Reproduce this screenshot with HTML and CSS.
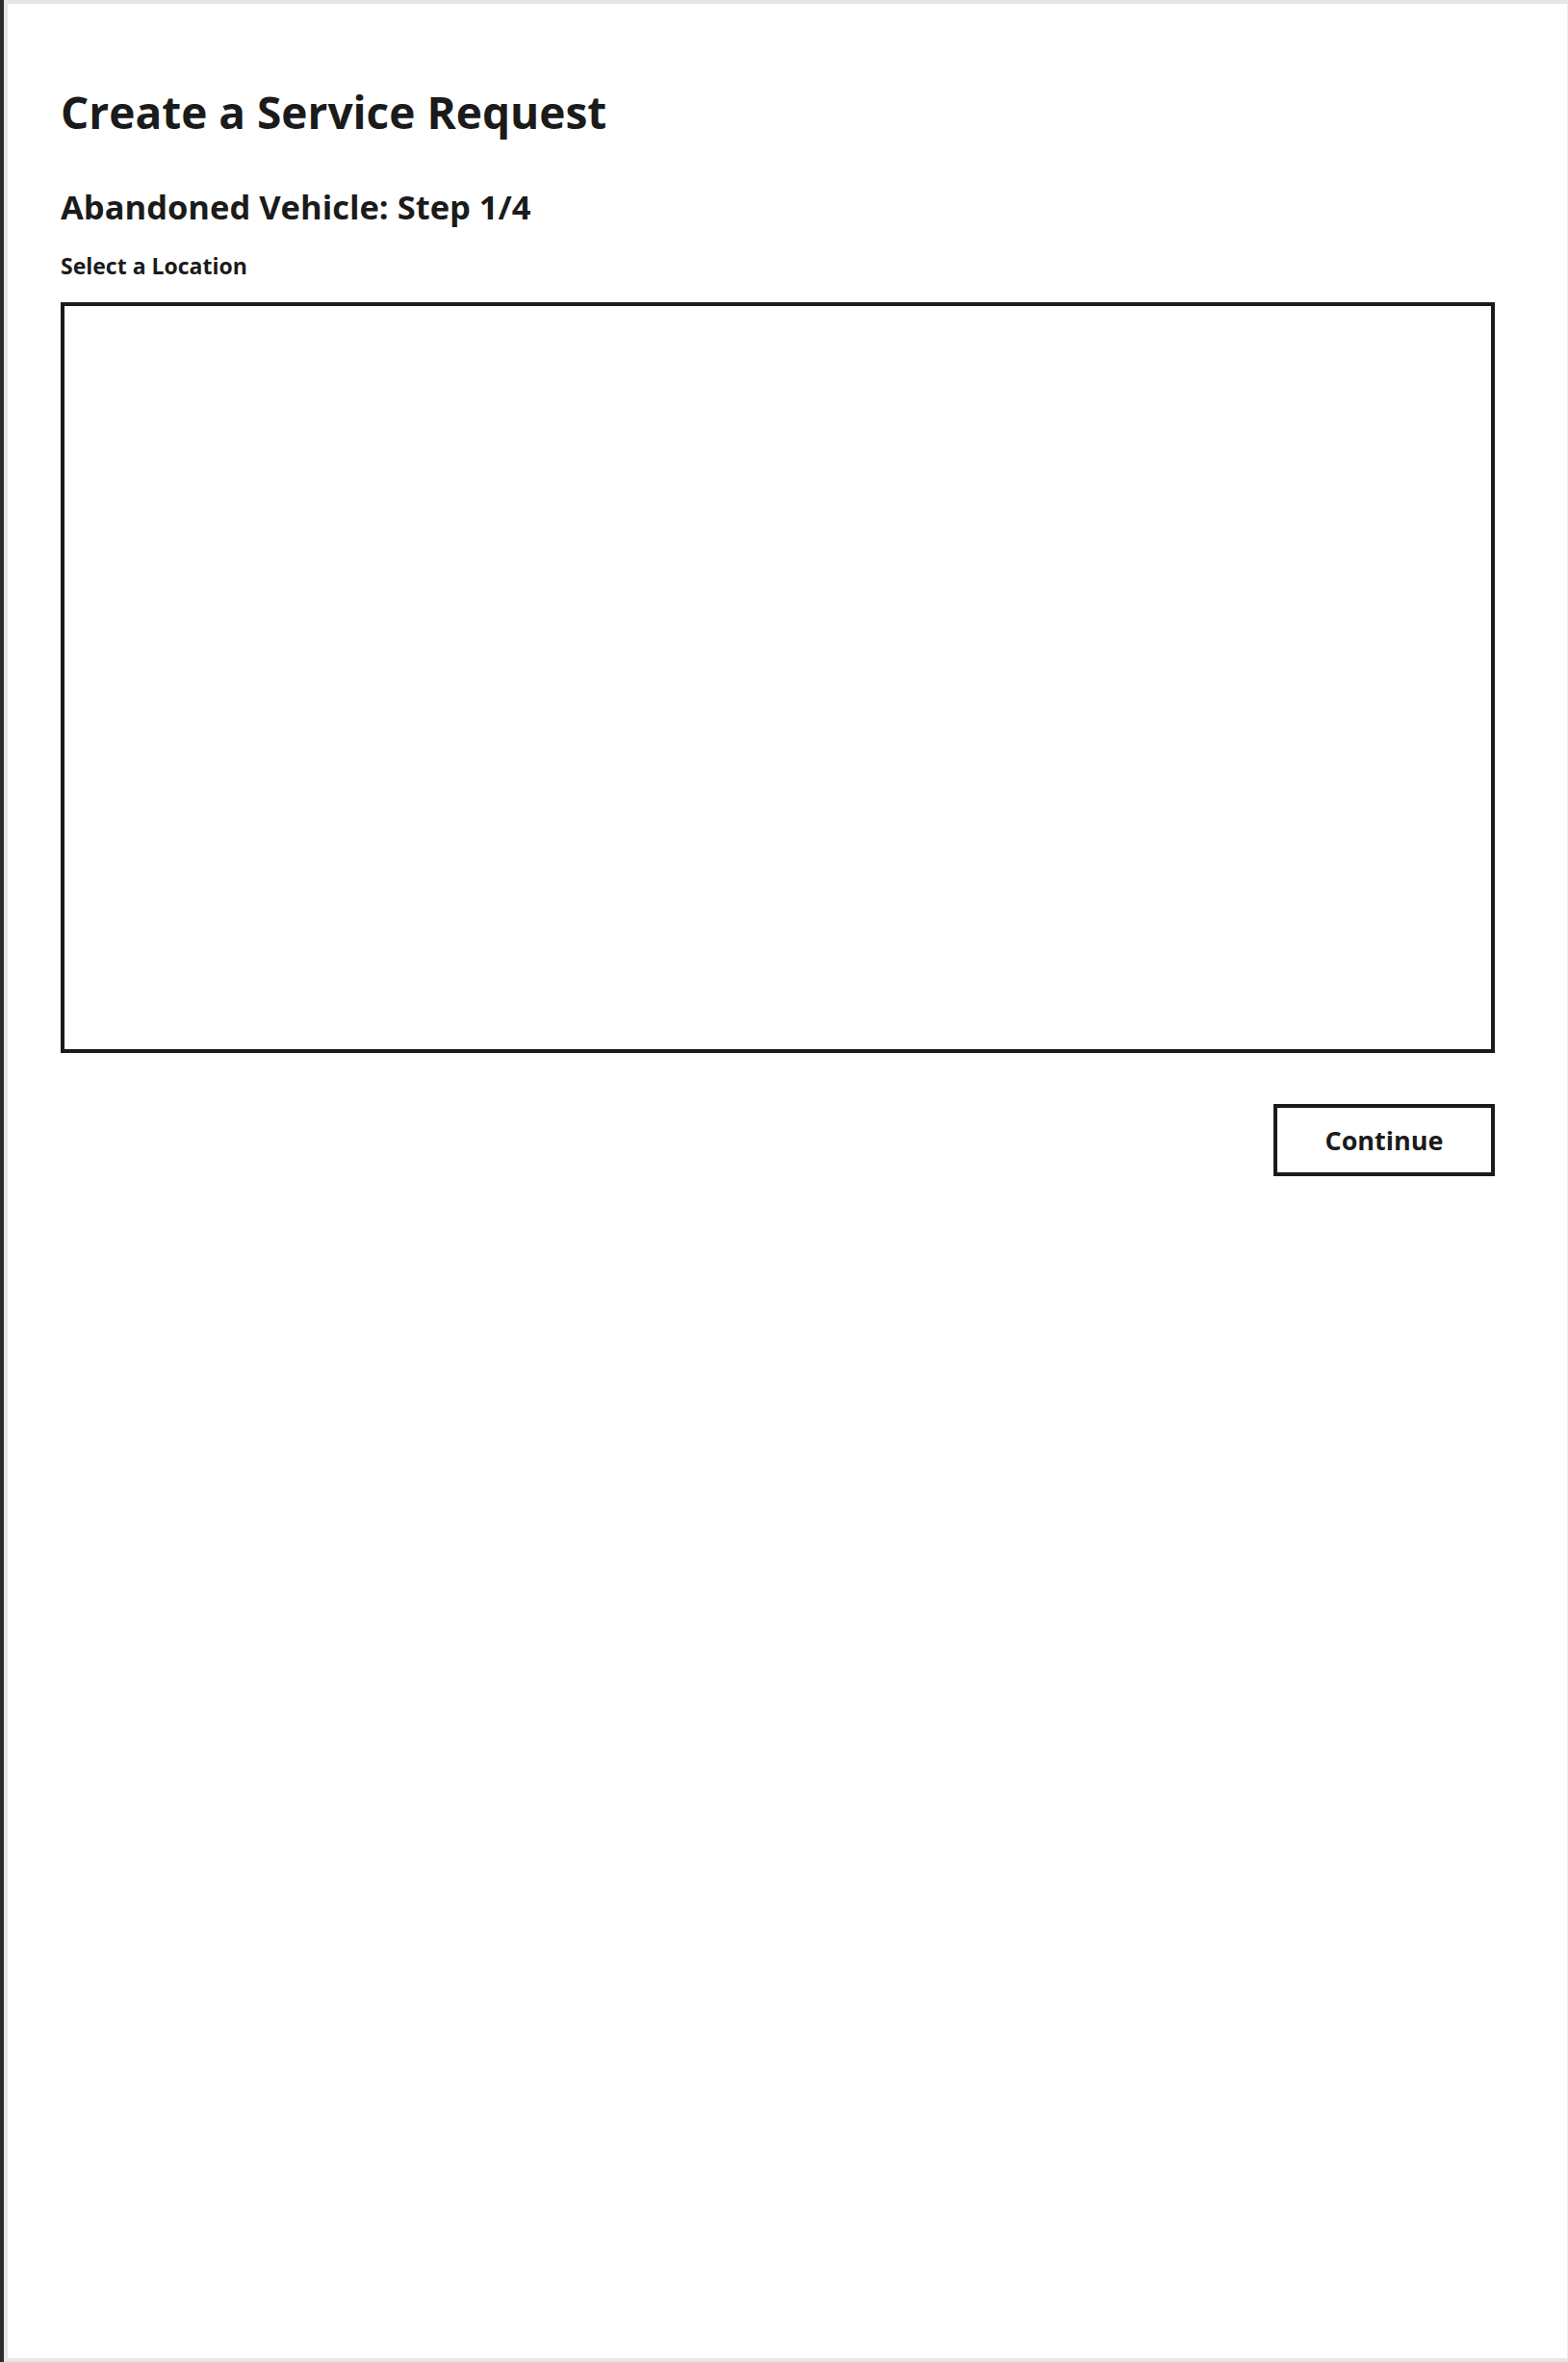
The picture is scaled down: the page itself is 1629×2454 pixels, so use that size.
FILE: index.html
```html
<!DOCTYPE html>
<html lang="en">
<head>
<meta charset="utf-8">
<title>Create a Service Request</title>
<link rel="stylesheet" href="styles.css">
</head>
<body>
<div class="frame">
  <main class="content">
    <h1 class="title">Create a Service Request</h1>
    <h2 class="step">Abandoned Vehicle: Step 1/4</h2>
    <div class="label">Select a Location</div>
    <div class="map"></div>
    <div class="actions">
      <button class="btn" type="button">Continue</button>
    </div>
  </main>
</div>
</body>
</html>
```
FILE: styles.css
```css
html, body {
  margin: 0;
  padding: 0;
  height: 100%;
}
body {
  background: #ffffff;
  border-left: 4px solid #2b2b2b;
  box-sizing: border-box;
  font-family: "Open Sans", "Noto Sans", sans-serif;
  color: #1b1b1b;
}
.frame {
  box-sizing: border-box;
  height: 2454px;
  border-top: 4px solid #e6e6e6;
  border-left: 4px solid #e6e6e6;
  border-bottom: 4px solid #e6e6e6;
  border-right: 1px solid #ececec;
  background: #ffffff;
}
.content {
  width: 1490px;
  padding-left: 55px;
  padding-top: 85px;
}
.title {
  margin: 0;
  font-size: 46px;
  line-height: 1.2;
  font-weight: 700;
}
.step {
  margin: 50px 0 0;
  font-size: 34.5px;
  line-height: 1.2;
  font-weight: 700;
}
.label {
  margin-top: 27px;
  font-size: 23px;
  line-height: 1.2;
  font-weight: 700;
}
.map {
  margin-top: 24px;
  box-sizing: border-box;
  height: 780px;
  border: 4px solid #1b1b1b;
  background: #ffffff;
}
.actions {
  display: flex;
  justify-content: flex-end;
  margin-top: 53px;
}
.btn {
  box-sizing: border-box;
  width: 230px;
  height: 75px;
  border: 4px solid #1b1b1b;
  background: #ffffff;
  color: #1b1b1b;
  font-family: "Open Sans", "Noto Sans", sans-serif;
  font-size: 27px;
  font-weight: 700;
  padding: 0;
  border-radius: 0;
}
```
